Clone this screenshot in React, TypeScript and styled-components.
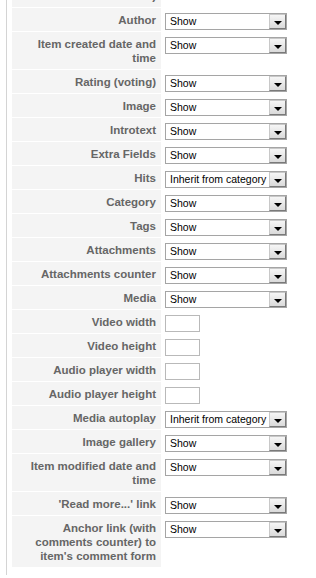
import { createGlobalStyle, styled } from "styled-components";

const GlobalStyle = createGlobalStyle`
  html, body {
    margin: 0;
    padding: 0;
    background: #fff;
    font-family: "Liberation Sans", Arial, sans-serif;
  }
`;

const Fieldset = styled.div`
  margin-left: 6px;
  border-left: 1px solid #d4d4d4;
  padding-left: 5px;
  padding-bottom: 8px;
  overflow: hidden;
`;

const ParamList = styled.div`
  display: grid;
  row-gap: 1px;
  margin-top: -30px;
`;

const Row = styled.div`
  display: grid;
  grid-template-columns: 149px 1fr;
  column-gap: 1px;
  align-items: start;
`;

const Key = styled.div`
  box-sizing: border-box;
  align-self: stretch;
  background: #f4f4f4;
  color: #666;
  font-weight: bold;
  font-size: 11.5px;
  line-height: 14px;
  text-align: right;
  padding: 5px 5px 4px 5px;
`;

const Value = styled.div`
  padding: 5px 0 1px 3px;
  display: flex;
`;

const SelectBox = styled.div`
  box-sizing: border-box;
  width: 122px;
  height: 17px;
  border: 1px solid #a5a5a5;
  background: #fff;
  display: flex;
  align-items: center;
  justify-content: space-between;
  font-size: 10.5px;
  color: #000;
  padding-left: 4px;
`;

const SelectText = styled.span`
  white-space: nowrap;
  line-height: 15px;
`;

const DropButton = styled.span`
  box-sizing: border-box;
  width: 17px;
  height: 15px;
  border: 1px solid;
  border-color: #c8c8c8 #7a7a7a #7a7a7a #c8c8c8;
  background: linear-gradient(#f6f6f6, #dadada);
  display: flex;
  align-items: center;
  justify-content: center;
  padding-top: 2px;
`;

const Arrow = styled.span`
  width: 0;
  height: 0;
  border-left: 4px solid transparent;
  border-right: 4px solid transparent;
  border-top: 4px solid #000;
`;

const TextInput = styled.div`
  box-sizing: border-box;
  width: 35px;
  height: 17px;
  border: 1px solid #b9b9b9;
  background: #fff;
`;

type Param = { label: string; value?: string };

const params: Param[] = [
  { label: "Featured notice (next to title)", value: "Show" },
  { label: "Author", value: "Show" },
  { label: "Item created date and time", value: "Show" },
  { label: "Rating (voting)", value: "Show" },
  { label: "Image", value: "Show" },
  { label: "Introtext", value: "Show" },
  { label: "Extra Fields", value: "Show" },
  { label: "Hits", value: "Inherit from category" },
  { label: "Category", value: "Show" },
  { label: "Tags", value: "Show" },
  { label: "Attachments", value: "Show" },
  { label: "Attachments counter", value: "Show" },
  { label: "Media", value: "Show" },
  { label: "Video width" },
  { label: "Video height" },
  { label: "Audio player width" },
  { label: "Audio player height" },
  { label: "Media autoplay", value: "Inherit from category" },
  { label: "Image gallery", value: "Show" },
  { label: "Item modified date and time", value: "Show" },
  { label: "'Read more...' link", value: "Show" },
  { label: "Anchor link (with comments counter) to item's comment form", value: "Show" },
];

const Select = ({ value }: { value: string }) => (
  <SelectBox>
    <SelectText>{value}</SelectText>
    <DropButton>
      <Arrow />
    </DropButton>
  </SelectBox>
);

const App = () => {
  return (
    <>
      <GlobalStyle />
      <Fieldset>
        <ParamList>
          {params.map((p) => (
            <Row key={p.label}>
              <Key>{p.label}</Key>
              <Value>{p.value ? <Select value={p.value} /> : <TextInput />}</Value>
            </Row>
          ))}
        </ParamList>
      </Fieldset>
    </>
  );
};

export default App;
